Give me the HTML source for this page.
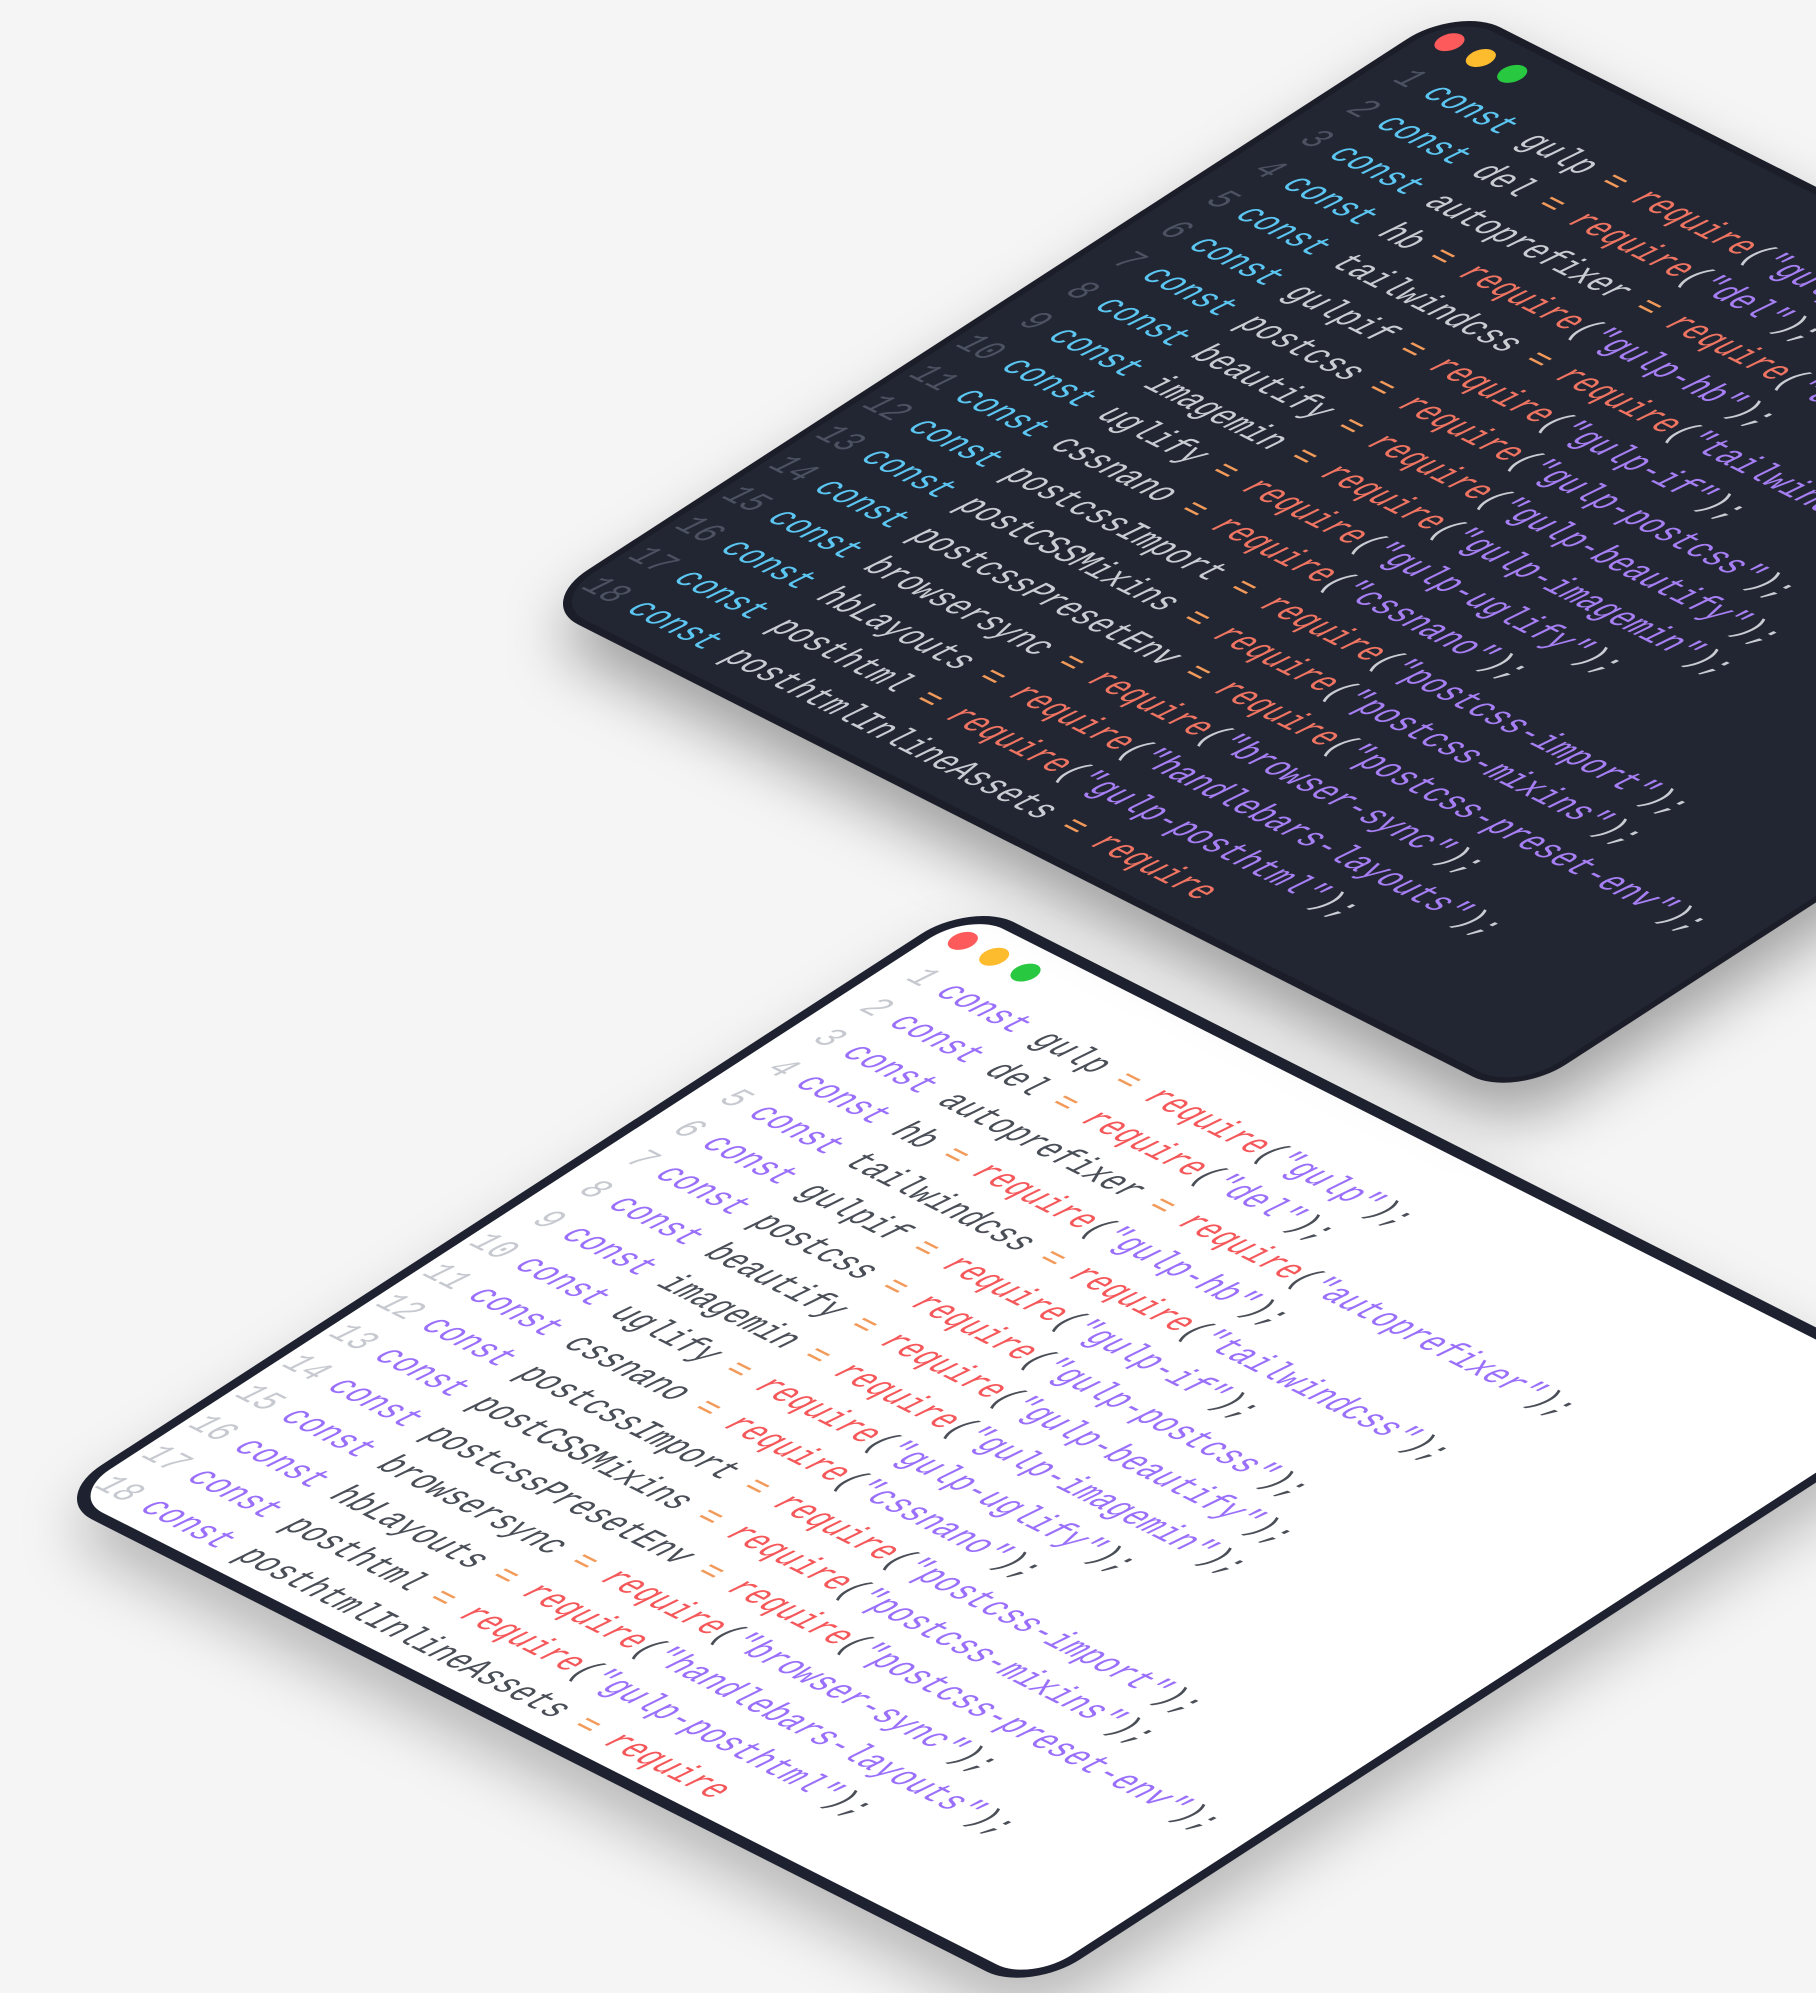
<!DOCTYPE html>
<html><head><meta charset="utf-8"><style>
html,body{margin:0;padding:0}
body{width:1816px;height:1859px;overflow:hidden;background:#f5f5f5;position:relative}
.win{position:absolute;width:1030px;height:788px;transform-origin:0 0;transform:matrix(0.95,0.48,-1.17,0.758,0,0);border-radius:44px;box-sizing:border-box;font-family:"Liberation Mono",monospace;font-style:italic;font-size:28px}
.dark{left:1458px;top:6px;background:#222632;border:6px solid #1b1e29;z-index:2;box-shadow:30px 24px 50px rgba(0,0,0,0.35)}
.light{left:972px;top:901px;background:#fff;border:9px solid #1e2230;z-index:1;box-shadow:30px 24px 50px rgba(0,0,0,0.25)}
.dots{position:absolute;left:12px;top:14px}
.dots span{position:absolute;width:20px;height:20px;border-radius:50%;top:0}
.code{position:absolute;left:0;top:48px;line-height:40px;white-space:pre}
.ln{display:inline-block;width:34px;text-align:right;margin-left:6px;margin-right:14px}
.dark .ln{color:#4c5262}.dark .k{color:#5cc6f2}.dark .i{color:#c9ccd2}.dark .o{color:#f29a5a}.dark .r{color:#f07462}.dark .s{color:#a77ff5}.dark .p{color:#c9ccd2}
.light .ln{color:#c6c9cf}.light .k{color:#9a70fb}.light .i{color:#4a4e57}.light .o{color:#f29a5a}.light .r{color:#f5585a}.light .s{color:#9a70fb}.light .p{color:#4a4e57}
</style></head><body>
<div class="win dark">
<div class="dots"><span style="left:0;background:#fd5b5b"></span><span style="left:33px;background:#fdbb2e"></span><span style="left:66px;background:#28c840"></span></div>
<div class="code"><span class="ln">1</span><span class="k">const</span> <span class="i">gulp</span> <span class="o">=</span> <span class="r">require</span><span class="p">(</span><span class="s">"gulp"</span><span class="p">);</span>
<span class="ln">2</span><span class="k">const</span> <span class="i">del</span> <span class="o">=</span> <span class="r">require</span><span class="p">(</span><span class="s">"del"</span><span class="p">);</span>
<span class="ln">3</span><span class="k">const</span> <span class="i">autoprefixer</span> <span class="o">=</span> <span class="r">require</span><span class="p">(</span><span class="s">"autoprefixer"</span><span class="p">);</span>
<span class="ln">4</span><span class="k">const</span> <span class="i">hb</span> <span class="o">=</span> <span class="r">require</span><span class="p">(</span><span class="s">"gulp-hb"</span><span class="p">);</span>
<span class="ln">5</span><span class="k">const</span> <span class="i">tailwindcss</span> <span class="o">=</span> <span class="r">require</span><span class="p">(</span><span class="s">"tailwindcss"</span><span class="p">);</span>
<span class="ln">6</span><span class="k">const</span> <span class="i">gulpif</span> <span class="o">=</span> <span class="r">require</span><span class="p">(</span><span class="s">"gulp-if"</span><span class="p">);</span>
<span class="ln">7</span><span class="k">const</span> <span class="i">postcss</span> <span class="o">=</span> <span class="r">require</span><span class="p">(</span><span class="s">"gulp-postcss"</span><span class="p">);</span>
<span class="ln">8</span><span class="k">const</span> <span class="i">beautify</span> <span class="o">=</span> <span class="r">require</span><span class="p">(</span><span class="s">"gulp-beautify"</span><span class="p">);</span>
<span class="ln">9</span><span class="k">const</span> <span class="i">imagemin</span> <span class="o">=</span> <span class="r">require</span><span class="p">(</span><span class="s">"gulp-imagemin"</span><span class="p">);</span>
<span class="ln">10</span><span class="k">const</span> <span class="i">uglify</span> <span class="o">=</span> <span class="r">require</span><span class="p">(</span><span class="s">"gulp-uglify"</span><span class="p">);</span>
<span class="ln">11</span><span class="k">const</span> <span class="i">cssnano</span> <span class="o">=</span> <span class="r">require</span><span class="p">(</span><span class="s">"cssnano"</span><span class="p">);</span>
<span class="ln">12</span><span class="k">const</span> <span class="i">postcssImport</span> <span class="o">=</span> <span class="r">require</span><span class="p">(</span><span class="s">"postcss-import"</span><span class="p">);</span>
<span class="ln">13</span><span class="k">const</span> <span class="i">postCSSMixins</span> <span class="o">=</span> <span class="r">require</span><span class="p">(</span><span class="s">"postcss-mixins"</span><span class="p">);</span>
<span class="ln">14</span><span class="k">const</span> <span class="i">postcssPresetEnv</span> <span class="o">=</span> <span class="r">require</span><span class="p">(</span><span class="s">"postcss-preset-env"</span><span class="p">);</span>
<span class="ln">15</span><span class="k">const</span> <span class="i">browsersync</span> <span class="o">=</span> <span class="r">require</span><span class="p">(</span><span class="s">"browser-sync"</span><span class="p">);</span>
<span class="ln">16</span><span class="k">const</span> <span class="i">hbLayouts</span> <span class="o">=</span> <span class="r">require</span><span class="p">(</span><span class="s">"handlebars-layouts"</span><span class="p">);</span>
<span class="ln">17</span><span class="k">const</span> <span class="i">posthtml</span> <span class="o">=</span> <span class="r">require</span><span class="p">(</span><span class="s">"gulp-posthtml"</span><span class="p">);</span>
<span class="ln">18</span><span class="k">const</span> <span class="i">posthtmlInlineAssets</span> <span class="o">=</span> <span class="r">require</span></div>
</div>
<div class="win light">
<div class="dots"><span style="left:0;background:#fd5b5b"></span><span style="left:33px;background:#fdbb2e"></span><span style="left:66px;background:#28c840"></span></div>
<div class="code"><span class="ln">1</span><span class="k">const</span> <span class="i">gulp</span> <span class="o">=</span> <span class="r">require</span><span class="p">(</span><span class="s">"gulp"</span><span class="p">);</span>
<span class="ln">2</span><span class="k">const</span> <span class="i">del</span> <span class="o">=</span> <span class="r">require</span><span class="p">(</span><span class="s">"del"</span><span class="p">);</span>
<span class="ln">3</span><span class="k">const</span> <span class="i">autoprefixer</span> <span class="o">=</span> <span class="r">require</span><span class="p">(</span><span class="s">"autoprefixer"</span><span class="p">);</span>
<span class="ln">4</span><span class="k">const</span> <span class="i">hb</span> <span class="o">=</span> <span class="r">require</span><span class="p">(</span><span class="s">"gulp-hb"</span><span class="p">);</span>
<span class="ln">5</span><span class="k">const</span> <span class="i">tailwindcss</span> <span class="o">=</span> <span class="r">require</span><span class="p">(</span><span class="s">"tailwindcss"</span><span class="p">);</span>
<span class="ln">6</span><span class="k">const</span> <span class="i">gulpif</span> <span class="o">=</span> <span class="r">require</span><span class="p">(</span><span class="s">"gulp-if"</span><span class="p">);</span>
<span class="ln">7</span><span class="k">const</span> <span class="i">postcss</span> <span class="o">=</span> <span class="r">require</span><span class="p">(</span><span class="s">"gulp-postcss"</span><span class="p">);</span>
<span class="ln">8</span><span class="k">const</span> <span class="i">beautify</span> <span class="o">=</span> <span class="r">require</span><span class="p">(</span><span class="s">"gulp-beautify"</span><span class="p">);</span>
<span class="ln">9</span><span class="k">const</span> <span class="i">imagemin</span> <span class="o">=</span> <span class="r">require</span><span class="p">(</span><span class="s">"gulp-imagemin"</span><span class="p">);</span>
<span class="ln">10</span><span class="k">const</span> <span class="i">uglify</span> <span class="o">=</span> <span class="r">require</span><span class="p">(</span><span class="s">"gulp-uglify"</span><span class="p">);</span>
<span class="ln">11</span><span class="k">const</span> <span class="i">cssnano</span> <span class="o">=</span> <span class="r">require</span><span class="p">(</span><span class="s">"cssnano"</span><span class="p">);</span>
<span class="ln">12</span><span class="k">const</span> <span class="i">postcssImport</span> <span class="o">=</span> <span class="r">require</span><span class="p">(</span><span class="s">"postcss-import"</span><span class="p">);</span>
<span class="ln">13</span><span class="k">const</span> <span class="i">postCSSMixins</span> <span class="o">=</span> <span class="r">require</span><span class="p">(</span><span class="s">"postcss-mixins"</span><span class="p">);</span>
<span class="ln">14</span><span class="k">const</span> <span class="i">postcssPresetEnv</span> <span class="o">=</span> <span class="r">require</span><span class="p">(</span><span class="s">"postcss-preset-env"</span><span class="p">);</span>
<span class="ln">15</span><span class="k">const</span> <span class="i">browsersync</span> <span class="o">=</span> <span class="r">require</span><span class="p">(</span><span class="s">"browser-sync"</span><span class="p">);</span>
<span class="ln">16</span><span class="k">const</span> <span class="i">hbLayouts</span> <span class="o">=</span> <span class="r">require</span><span class="p">(</span><span class="s">"handlebars-layouts"</span><span class="p">);</span>
<span class="ln">17</span><span class="k">const</span> <span class="i">posthtml</span> <span class="o">=</span> <span class="r">require</span><span class="p">(</span><span class="s">"gulp-posthtml"</span><span class="p">);</span>
<span class="ln">18</span><span class="k">const</span> <span class="i">posthtmlInlineAssets</span> <span class="o">=</span> <span class="r">require</span></div>
</div>
</body></html>
